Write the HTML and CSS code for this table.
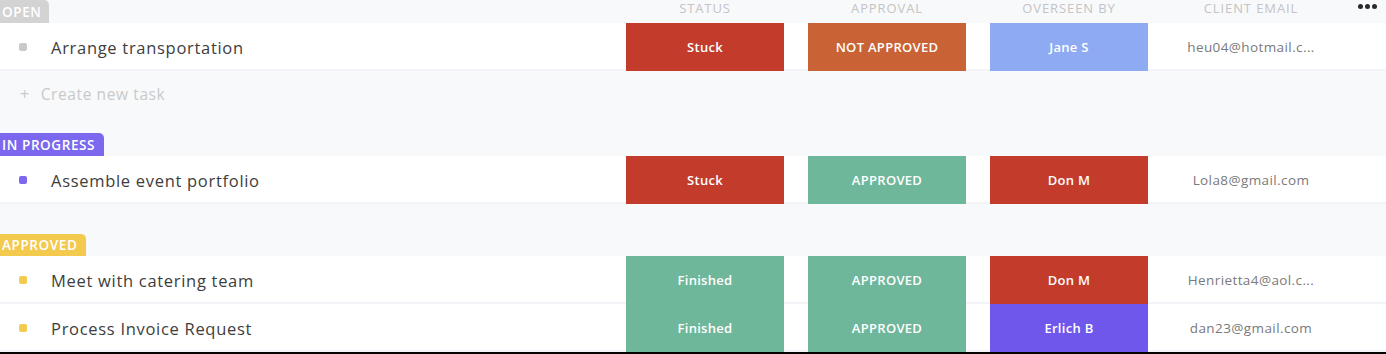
FILE: index.html
```html
<!DOCTYPE html>
<html>
<head>
<meta charset="utf-8">
<link rel="stylesheet" href="styles.css">
</head>
<body>
<div class="board">
  <section class="group group-open">
    <div class="grid head">
      <div class="head-name"><span class="tag tag-open">OPEN</span></div>
      <div class="col-label">STATUS</div>
      <div class="col-label">APPROVAL</div>
      <div class="col-label">OVERSEEN BY</div>
      <div class="col-label">CLIENT EMAIL</div>
      <div class="more"><span></span><span></span><span></span></div>
    </div>
    <div class="grid row">
      <div class="name"><span class="dot dot-open"></span>Arrange transportation</div>
      <div class="cell"><span class="pill red">Stuck</span></div>
      <div class="cell"><span class="pill orange">NOT APPROVED</span></div>
      <div class="cell"><span class="pill blue">Jane S</span></div>
      <div class="email">heu04@hotmail.c...</div>
      <div class="end"></div>
    </div>
    <div class="new-task"><span class="plus">+</span>Create new task</div>
  </section>

  <section class="group group-progress">
    <div class="grid head">
      <div class="head-name"><span class="tag tag-progress">IN PROGRESS</span></div>
    </div>
    <div class="grid row">
      <div class="name"><span class="dot dot-progress"></span>Assemble event portfolio</div>
      <div class="cell"><span class="pill red">Stuck</span></div>
      <div class="cell"><span class="pill green">APPROVED</span></div>
      <div class="cell"><span class="pill red">Don M</span></div>
      <div class="email">Lola8@gmail.com</div>
      <div class="end"></div>
    </div>
  </section>

  <section class="group group-approved">
    <div class="grid head">
      <div class="head-name"><span class="tag tag-approved">APPROVED</span></div>
    </div>
    <div class="grid row">
      <div class="name"><span class="dot dot-approved"></span>Meet with catering team</div>
      <div class="cell"><span class="pill green">Finished</span></div>
      <div class="cell"><span class="pill green">APPROVED</span></div>
      <div class="cell"><span class="pill red">Don M</span></div>
      <div class="email">Henrietta4@aol.c...</div>
      <div class="end"></div>
    </div>
    <div class="grid row">
      <div class="name"><span class="dot dot-approved"></span>Process Invoice Request</div>
      <div class="cell"><span class="pill green">Finished</span></div>
      <div class="cell"><span class="pill green">APPROVED</span></div>
      <div class="cell"><span class="pill purple">Erlich B</span></div>
      <div class="email">dan23@gmail.com</div>
      <div class="end"></div>
    </div>
  </section>
  <div class="bottom-line"></div>
</div>
</body>
</html>
```

FILE: styles.css
```css
* { box-sizing: border-box; }
html, body { margin: 0; padding: 0; }
body {
  background: #f8f9fb;
  font-family: "Open Sans", "Liberation Sans", sans-serif;
  width: 1386px;
  height: 354px;
  overflow: hidden;
}
.board { display: flex; flex-direction: column; }

.grid {
  display: grid;
  grid-template-columns: 614px 182px 182px 182px 182px 44px;
}

.head { height: 23px; align-items: center; }
.head-name { height: 23px; display: flex; align-items: stretch; }
.group-approved .head, .group-approved .head-name { height: 22px; }
.tag {
  display: flex;
  align-items: center;
  padding: 0 9px 0 2px;
  color: #fff;
  font-weight: 600;
  font-size: 13.5px;
  letter-spacing: 0.6px;
  border-radius: 0 5px 0 0;
}
.tag-open { background: #d3d3d3; padding-right: 8px; }
.tag-progress { background: #7b68ee; }
.tag-approved { background: #f3c94e; }

.col-label {
  text-align: center;
  color: #c4c4c4;
  font-size: 13px;
  letter-spacing: 0.9px;
  line-height: 14px;
  margin-top: -8px;
}
.more {
  display: flex;
  gap: 2px;
  justify-content: center;
  margin-top: -11px;
  padding-left: 6px;
}
.more span {
  width: 5px; height: 5px; border-radius: 50%; background: #2b2b2b;
}

.row { height: 48px; background: #fff; }
.name {
  display: flex;
  align-items: center;
  font-size: 16.5px;
  color: #3d3d3d;
  letter-spacing: 0.7px;
  box-shadow: inset 0 -2px 0 #f3f4f7;
}
.dot {
  width: 8px; height: 8px; border-radius: 2px;
  margin: 0 24px 0 19px;
}
.dot-open { background: #c9c9c9; }
.dot-progress { background: #7b68ee; }
.dot-approved { background: #f3c94e; }

.cell { padding: 0 12px; display: flex; box-shadow: inset 0 -2px 0 #f3f4f7; }
.pill {
  flex: 1;
  display: flex;
  align-items: center;
  justify-content: center;
  color: #fff;
  font-size: 13px;
  font-weight: 600;
  letter-spacing: 0.3px;
}
.red { background: #c23b2b; }
.orange { background: #c96234; }
.green { background: #6fb79b; }
.blue { background: #8eaaf2; }
.purple { background: #6e57ea; }

.email {
  display: flex;
  align-items: center;
  justify-content: center;
  font-size: 13.5px;
  letter-spacing: 0.4px;
  color: #7a7a7a;
  box-shadow: inset 0 -2px 0 #f3f4f7;
}
.end { box-shadow: inset 0 -2px 0 #f3f4f7; }

.new-task {
  height: 46px;
  display: flex;
  align-items: center;
  color: #c9c9c9;
  font-size: 15.5px;
  letter-spacing: 0.6px;
}
.plus { margin: 0 11px 0 20px; font-size: 16px; }

.group-progress { margin-top: 16px; }
.group-approved { margin-top: 30px; }

.bottom-line { height: 2px; background: #000; }
```
